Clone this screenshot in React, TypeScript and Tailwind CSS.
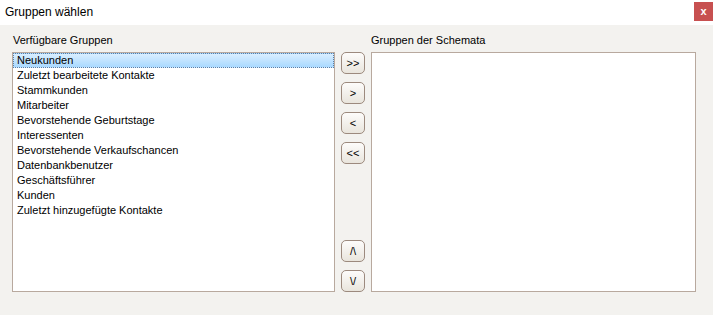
import React from "react";

const items = [
  "Neukunden",
  "Zuletzt bearbeitete Kontakte",
  "Stammkunden",
  "Mitarbeiter",
  "Bevorstehende Geburtstage",
  "Interessenten",
  "Bevorstehende Verkaufschancen",
  "Datenbankbenutzer",
  "Geschäftsführer",
  "Kunden",
  "Zuletzt hinzugefügte Kontakte",
];

function Btn({ label }: { label: string }) {
  return (
    <button className="w-[24px] h-[22px] rounded-[5px] border border-[#9c8a7e] bg-gradient-to-b from-[#fdfcfb] to-[#e9e5dd] text-[11px] leading-none text-black flex items-center justify-center p-0">
      {label}
    </button>
  );
}

export default function App() {
  return (
    <div
      className="w-[713px] h-[315px] bg-[#f3f2ef] flex flex-col text-[11px] text-black"
      style={{ fontFamily: '"Liberation Sans", Arial, sans-serif' }}
    >
      <div className="h-[25px] bg-white flex items-start justify-between">
        <div className="pl-[5px] pt-[5px] text-[12px] leading-[14px]">Gruppen wählen</div>
        <div className="mt-[2px] w-[19px] h-[19px] bg-[#c75050] text-white font-bold text-[11px] flex items-center justify-center leading-none">
          x
        </div>
      </div>
      <div className="flex pl-[12px] pt-[9px] gap-[6px]">
        <div className="flex flex-col w-[323px]">
          <div className="h-[18px] pl-[1px] leading-[13px]">Verfügbare Gruppen</div>
          <div className="h-[240px] bg-white border border-[#b8a99e] p-0">
            {items.map((it, i) => (
              <div
                key={it}
                className={
                  i === 0
                    ? "h-[15px] leading-[13px] pl-[3px] border border-dotted border-[#5a7fa8] bg-gradient-to-b from-[#d9eeff] to-[#a9d9ff]"
                    : "h-[15px] leading-[15px] pl-[4px]"
                }
              >
                {it}
              </div>
            ))}
          </div>
        </div>
        <div className="w-[24px] flex flex-col pt-[18px] h-[258px]">
          <div className="flex flex-col gap-[8px]">
            <Btn label=">>" />
            <Btn label=">" />
            <Btn label="<" />
            <Btn label="<<" />
          </div>
          <div className="flex-1" />
          <div className="flex flex-col gap-[8px]">
            <Btn label="/\" />
            <Btn label="\/" />
          </div>
        </div>
        <div className="flex flex-col w-[325px]">
          <div className="h-[18px] pl-[0px] leading-[13px]">Gruppen der Schemata</div>
          <div className="h-[240px] bg-white border border-[#b8a99e]" />
        </div>
      </div>
    </div>
  );
}
